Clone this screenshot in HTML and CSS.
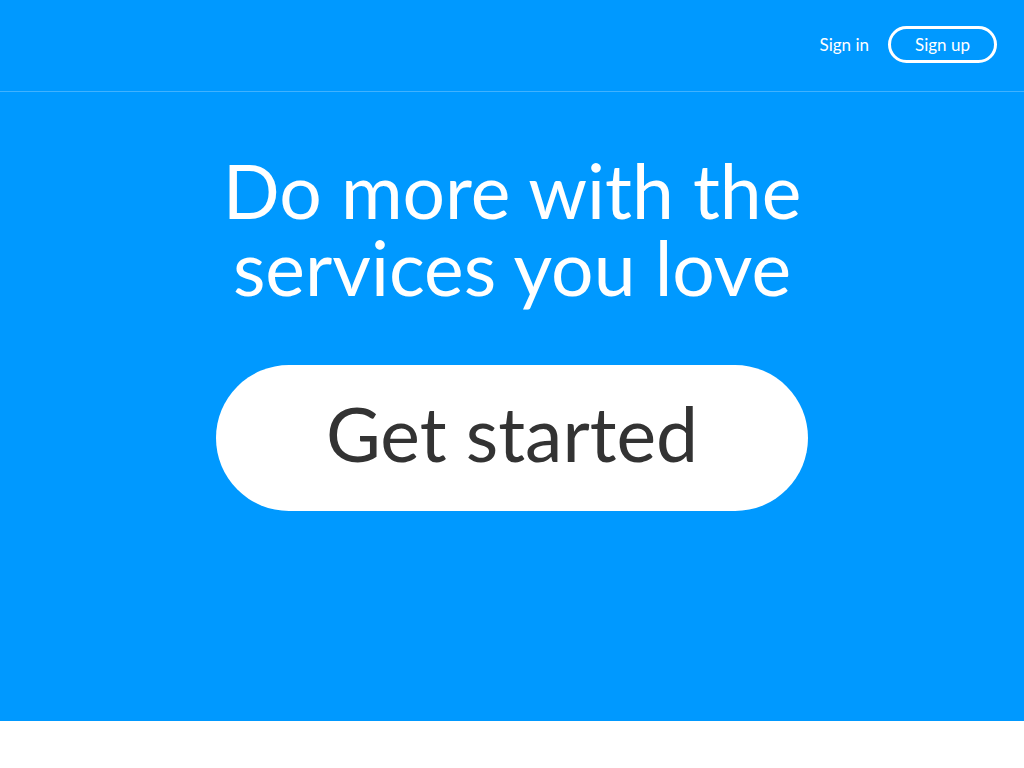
FILE: index.html
```html
<!DOCTYPE html>
<html lang="en">
<head>
<meta charset="utf-8">
<title>IFTTT</title>
<link rel="stylesheet" href="styles.css">
</head>
<body>
<div class="page">
  <header class="header">
    <nav class="nav">
      <a class="nav-link" href="#">Sign in</a>
      <a class="nav-btn" href="#">Sign up</a>
    </nav>
  </header>
  <section class="hero">
    <h1 class="headline">Do more with the<br>services you love</h1>
    <a class="cta" href="#">Get started</a>
  </section>
</div>
</body>
</html>
```

FILE: styles.css
```css
* { box-sizing: border-box; }
html, body { margin: 0; padding: 0; background: #fff; }
body { font-family: "Lato", "Noto Sans", sans-serif; }
a { text-decoration: none; }
.page { background: #0099ff; height: 721px; display: flex; flex-direction: column; }
.header {
  height: 92px;
  border-bottom: 1px solid rgba(255,255,255,0.25);
  display: flex;
  justify-content: flex-end;
  align-items: center;
  padding: 0 27px 0 0;
}
.nav { display: flex; align-items: center; gap: 19px; margin-top: -3px; }
.nav-link { color: #fff; font-size: 17px; }
.nav-btn {
  color: #fff;
  font-size: 17px;
  border: 3px solid #fff;
  border-radius: 20px;
  width: 109px;
  height: 37px;
  display: flex;
  align-items: center;
  justify-content: center;
}
.hero { display: flex; flex-direction: column; align-items: center; padding-top: 60px; }
.headline {
  margin: 0;
  color: #fff;
  font-weight: 400;
  font-size: 75px;
  line-height: 77px;
  text-align: center;
}
.cta {
  margin-top: 59px;
  width: 592px;
  height: 146px;
  border-radius: 73px;
  background: #fff;
  color: #333;
  font-size: 75px;
  padding-bottom: 10px;
  display: flex;
  align-items: center;
  justify-content: center;
}
```
